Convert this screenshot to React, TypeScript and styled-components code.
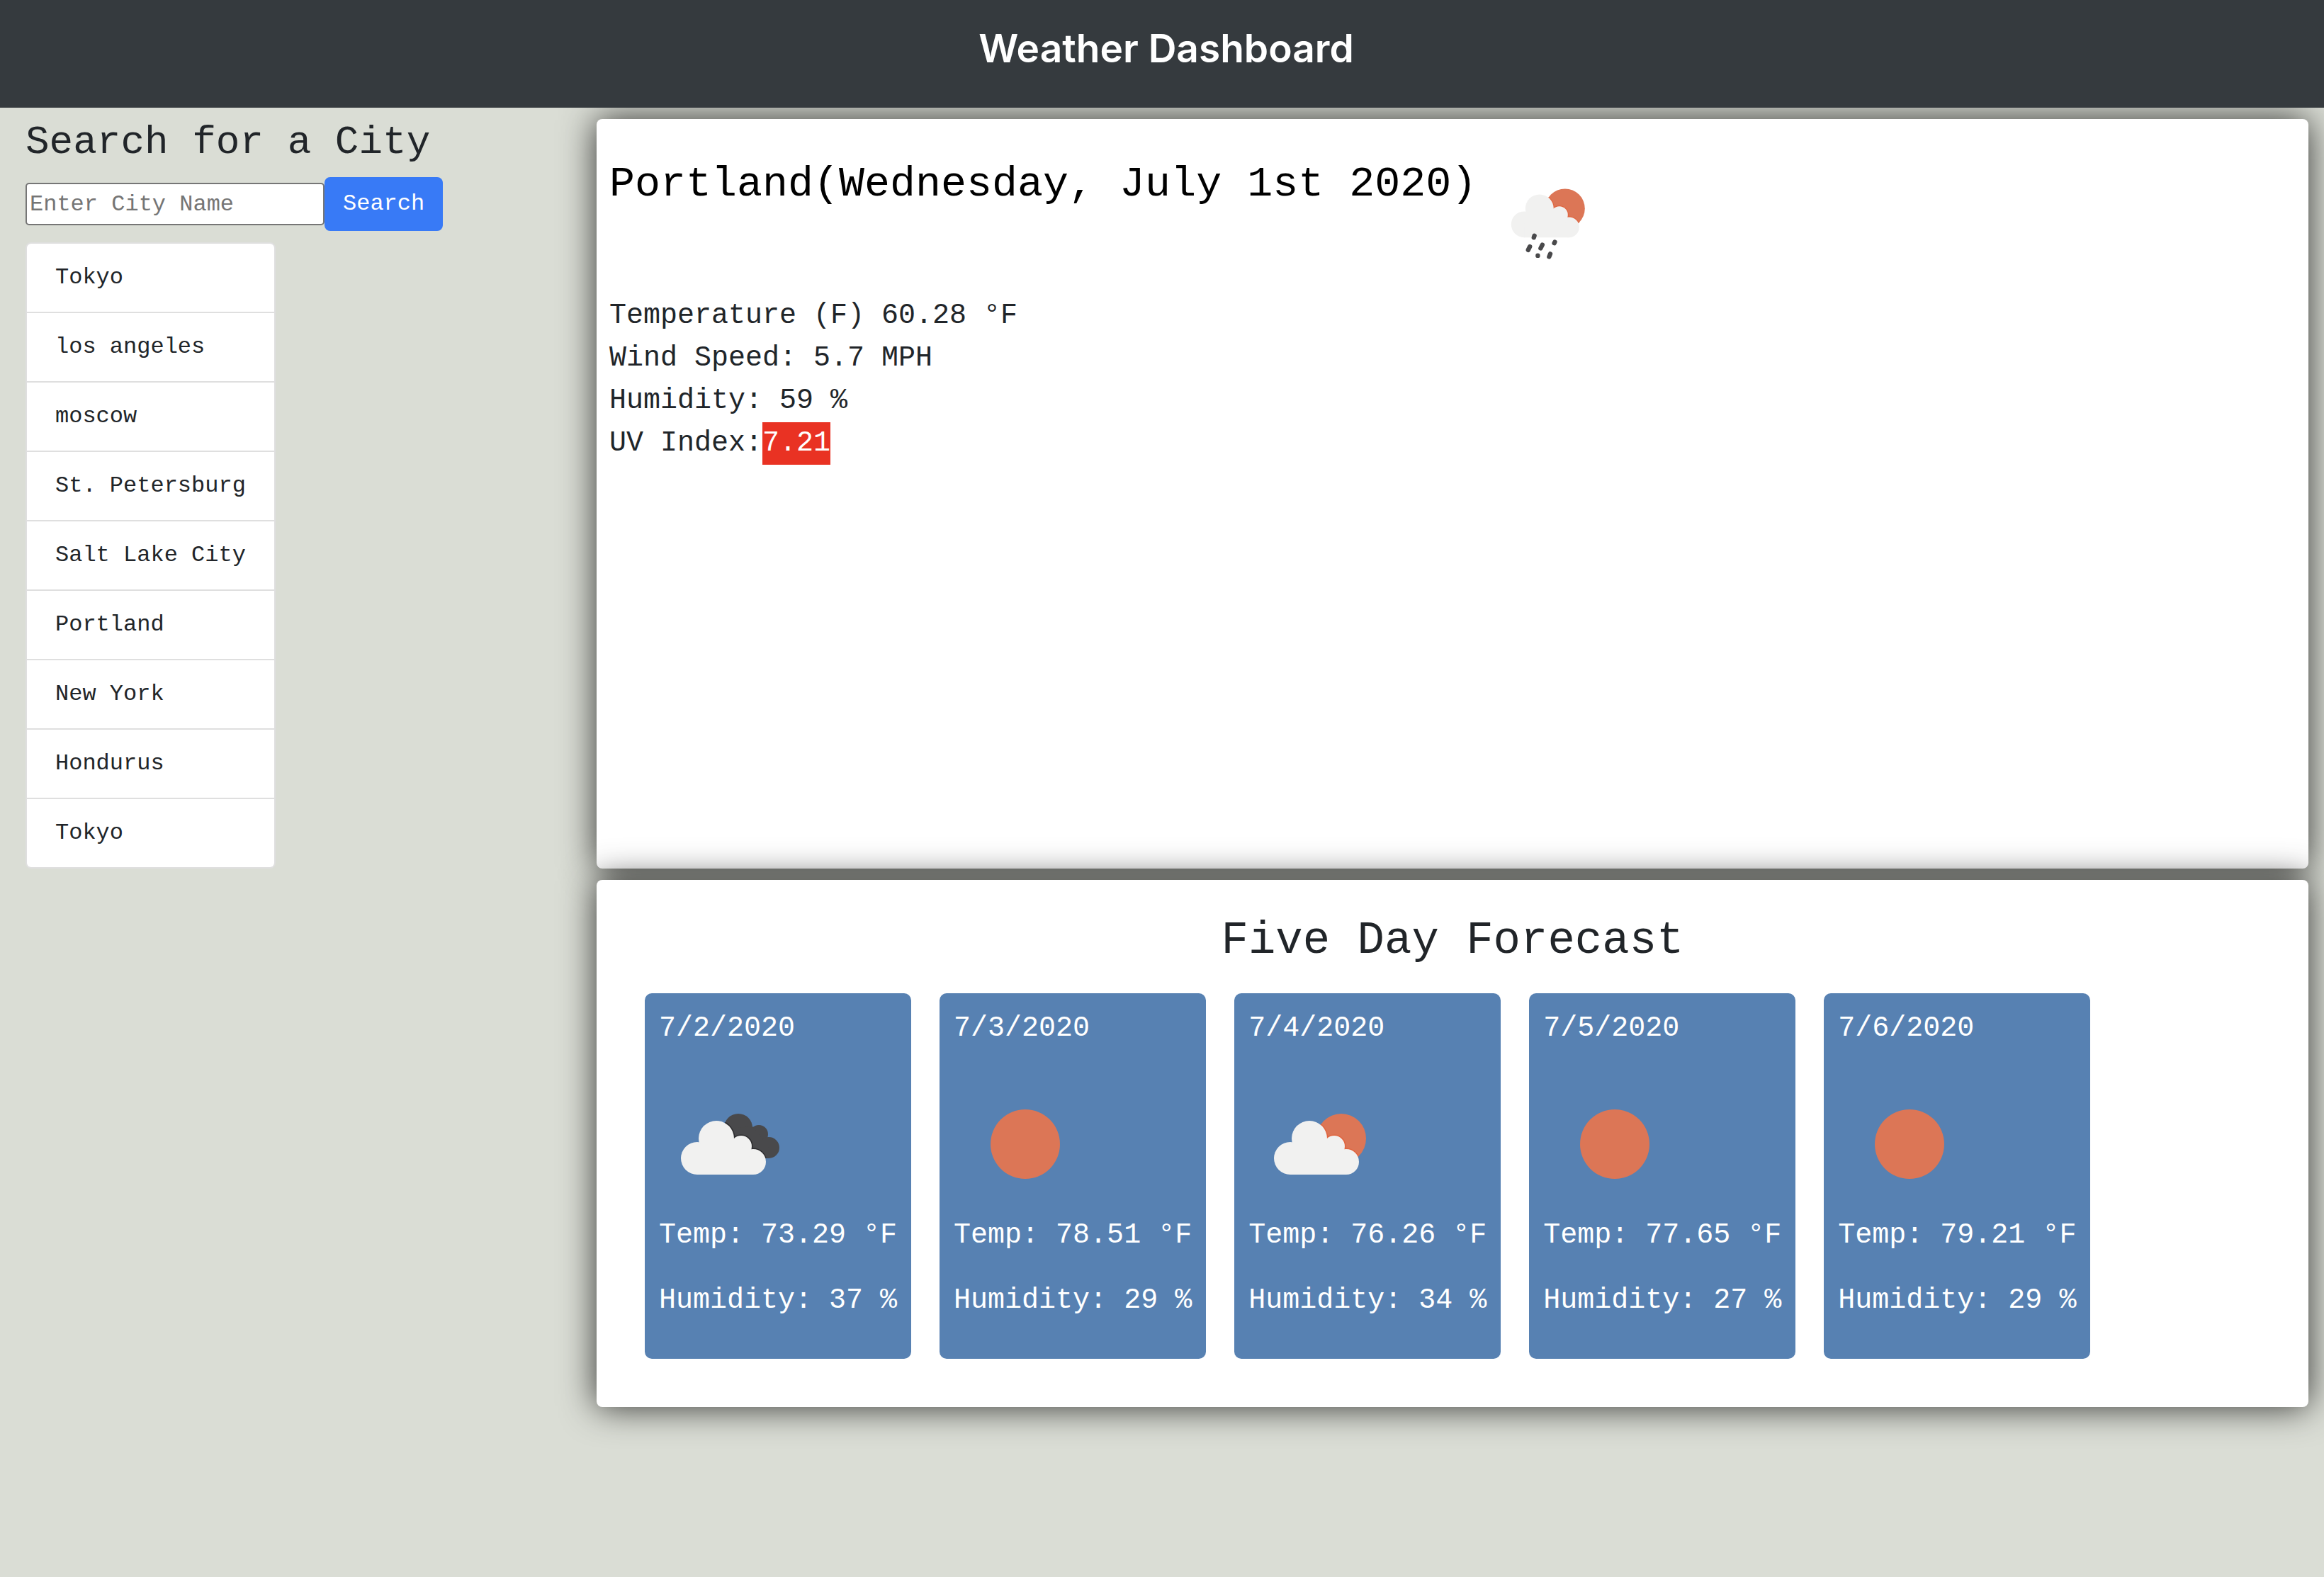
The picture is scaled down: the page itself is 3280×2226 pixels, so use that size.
import React from "react";
import styled, { createGlobalStyle } from "styled-components";

const mono = `"Courier New", "Liberation Mono", monospace`;

const GlobalStyle = createGlobalStyle`
  *, *::before, *::after { box-sizing: border-box; }
  body {
    margin: 0;
    background: #daddd5;
    color: #212529;
    font-family: ${mono};
    font-size: 32px;
    line-height: 48px;
  }
  h1, h2, h3, p, ul { margin: 0; padding: 0; font-weight: 400; }
  svg { display: block; flex: none; }
`;

const Page = styled.div`
  min-height: 100vh;
`;

const Header = styled.header`
  position: relative;
  z-index: 1;
  background: #353a3e;
  padding: 32px 0 48px 12px;
  text-align: center;
`;

const SiteTitle = styled.h1`
  && { font-weight: 600; }
  color: #fff;
  font-family: Inter, sans-serif;
  font-size: 55px;
  line-height: 72px;
`;

const Layout = styled.main`
  display: grid;
  grid-template-columns: 1fr 3fr;
`;

const Sidebar = styled.aside`
  padding: 16px 36px;
`;

const SidebarTitle = styled.h2`
  font-size: 56px;
  line-height: 66px;
  margin-bottom: 16px;
`;

const SearchForm = styled.form`
  display: flex;
  align-items: center;
  margin-bottom: 16px;
`;

const CityInput = styled.input`
  width: 422px;
  height: 60px;
  padding: 2px 4px;
  border: 2px solid #767676;
  border-radius: 5px;
  background: #fff;
  color: #212529;
  font: inherit;
  &::placeholder { color: #757575; opacity: 1; }
`;

const SearchButton = styled.button`
  padding: 12px 24px;
  border: 2px solid #387af6;
  border-radius: 8px;
  background: #387af6;
  color: #fff;
  font: inherit;
  cursor: pointer;
`;

const CityList = styled.ul`
  display: inline-flex;
  flex-direction: column;
  list-style: none;
`;

const City = styled.li`
  padding: 24px 40px;
  border: 2px solid #dfdfdf;
  background: #fff;
  & + & { border-top: 0; }
  &:first-child { border-radius: 8px 8px 0 0; }
  &:last-child { border-radius: 0 0 8px 8px; }
`;

const Panels = styled.div`
  display: grid;
  align-content: start;
  gap: 16px;
  padding: 16px 22px;
`;

const Panel = styled.section`
  border-radius: 8px;
  background: #fff;
  box-shadow: 0 0 50px rgba(0, 0, 0, 0.78);
`;

const CurrentPanel = styled(Panel)`
  min-height: 1058px;
  padding: 56px 18px;
`;

const CurrentHeading = styled.div`
  display: flex;
  gap: 20px;
  margin-bottom: 32px;
  color: #000;
`;

const CurrentTitle = styled.h2`
  font-size: 60px;
  line-height: 72px;
`;

const Reading = styled.p`
  font-size: 40px;
  line-height: 60px;
`;

const UvBadge = styled.span`
  display: inline-block;
  background: #e93223;
  color: #fff;
`;

const ForecastPanel = styled(Panel)`
  padding: 48px 68px 68px;
`;

const ForecastTitle = styled.h2`
  margin-bottom: 36px;
  font-size: 64px;
  line-height: 76px;
  text-align: center;
`;

const Days = styled.div`
  display: flex;
  flex-wrap: wrap;
  gap: 40px;
`;

const Day = styled.article`
  display: flex;
  flex-direction: column;
  padding: 20px 20px 52px;
  border-radius: 10px;
  background: #5781b2;
  color: #fff;
`;

const DayDate = styled.h3`
  margin-bottom: 32px;
  font-size: 40px;
  line-height: 60px;
`;

const DayReading = styled(Reading)`
  & + & { margin-top: 32px; }
`;

type Sky = "rain" | "clouds" | "sun" | "partly";

const ORANGE = "#dc7656";
const CHARCOAL = "#49494b";

const cloudShape = (
  <>
    <circle cx="59" cy="121" r="23" />
    <circle cx="86" cy="93" r="25" />
    <circle cx="121" cy="104" r="15" />
    <circle cx="138" cy="126" r="18" />
    <path d="M59 121 L64 98 L86 93 L121 104 L138 126 V144 H59 Z" />
  </>
);

/* A white cloud with a thin line of shade where it overlaps the shape behind it. */
const Cloud = ({ clip, edge }: { clip: string; edge: string }) => (
  <>
    <g clipPath={`url(#${clip})`} fill={edge} stroke={edge} strokeWidth="3">
      {cloudShape}
    </g>
    <g fill="#f1f1f0">{cloudShape}</g>
  </>
);

const SunBehind = () => (
  <>
    <clipPath id="sun-behind">
      <circle cx="131" cy="93" r="35" />
    </clipPath>
    <circle cx="131" cy="93" r="35" fill={ORANGE} />
    <Cloud clip="sun-behind" edge="#e0653f" />
  </>
);

const darkShape = (
  <>
    <circle cx="117" cy="78" r="20" />
    <circle cx="146" cy="87" r="13" />
    <circle cx="160" cy="106" r="15" />
    <path d="M117 78 L137 76 L146 87 L160 106 V121 H117 Z" />
  </>
);

function WeatherIcon({ sky, size }: { sky: Sky; size: number }) {
  return (
    <svg width={size} height={size} viewBox="0 0 200 200" role="img" aria-label={sky}>
      {sky === "sun" && <circle cx="101" cy="101" r="49" fill={ORANGE} />}
      {sky === "partly" && <SunBehind />}
      {sky === "clouds" && (
        <g transform="translate(-5 0)">
          <clipPath id="dark-behind">{darkShape}</clipPath>
          <g fill={CHARCOAL}>{darkShape}</g>
          <Cloud clip="dark-behind" edge="#2c2c2e" />
        </g>
      )}
      {sky === "rain" && (
        <>
          <g transform="translate(0 -5)">
            <SunBehind />
          </g>
          <path
            d="M77 136 l-1 3 M69 155 l-3 6 M91 152 l-3 6 M113 147 l-1 2 M83 171 v.1 M105 168 l-2 5"
            fill="none"
            stroke={CHARCOAL}
            strokeWidth="8"
            strokeLinecap="round"
          />
        </>
      )}
    </svg>
  );
}

const cities = [
  "Tokyo", "los angeles", "moscow", "St. Petersburg", "Salt Lake City",
  "Portland", "New York", "Hondurus", "Tokyo",
];

const forecast: { date: string; sky: Sky; temp: string; humidity: number }[] = [
  { date: "7/2/2020", sky: "clouds", temp: "73.29", humidity: 37 },
  { date: "7/3/2020", sky: "sun", temp: "78.51", humidity: 29 },
  { date: "7/4/2020", sky: "partly", temp: "76.26", humidity: 34 },
  { date: "7/5/2020", sky: "sun", temp: "77.65", humidity: 27 },
  { date: "7/6/2020", sky: "sun", temp: "79.21", humidity: 29 },
];

export default function App() {
  return (
    <Page>
      <GlobalStyle />
      <Header>
        <SiteTitle>Weather Dashboard</SiteTitle>
      </Header>
      <Layout>
        <Sidebar>
          <SidebarTitle>Search for a City</SidebarTitle>
          <SearchForm onSubmit={(e) => e.preventDefault()}>
            <CityInput type="text" placeholder="Enter City Name" aria-label="City name" />
            <SearchButton type="submit">Search</SearchButton>
          </SearchForm>
          <CityList>
            {cities.map((city, i) => (
              <City key={i}>{city}</City>
            ))}
          </CityList>
        </Sidebar>
        <Panels>
          <CurrentPanel>
            <CurrentHeading>
              <CurrentTitle>Portland(Wednesday, July 1st 2020)</CurrentTitle>
              <WeatherIcon sky="rain" size={160} />
            </CurrentHeading>
            <Reading>Temperature (F) 60.28 °F</Reading>
            <Reading>Wind Speed: 5.7 MPH</Reading>
            <Reading>Humidity: 59 %</Reading>
            <Reading>UV Index:<UvBadge>7.21</UvBadge></Reading>
          </CurrentPanel>
          <ForecastPanel>
            <ForecastTitle>Five Day Forecast</ForecastTitle>
            <Days>
              {forecast.map((day) => (
                <Day key={day.date}>
                  <DayDate>{day.date}</DayDate>
                  <WeatherIcon sky={day.sky} size={200} />
                  <DayReading>Temp: {day.temp} °F</DayReading>
                  <DayReading>Humidity: {day.humidity} %</DayReading>
                </Day>
              ))}
            </Days>
          </ForecastPanel>
        </Panels>
      </Layout>
    </Page>
  );
}
